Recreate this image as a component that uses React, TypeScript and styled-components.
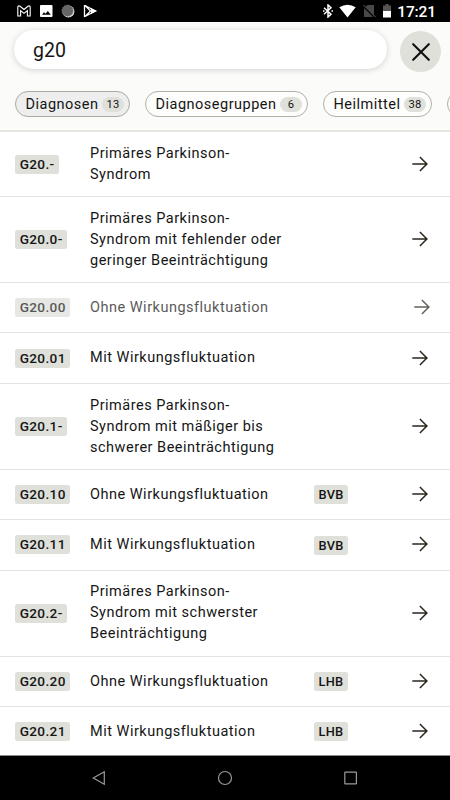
import React from "react";
import styled, { createGlobalStyle } from "styled-components";

const GlobalStyle = createGlobalStyle`
  * { box-sizing: border-box; }
  html, body { margin: 0; padding: 0; background: #fff; overflow: hidden; }
  button { font: inherit; color: inherit; letter-spacing: inherit; cursor: pointer; }
`;

const Screen = styled.div`
  width: 450px;
  height: 800px;
  display: flex;
  flex-direction: column;
  overflow: hidden;
  background: #fff;
  color: #151515;
  font-family: Roboto, sans-serif;
`;

const StatusBar = styled.div`
  flex: none;
  height: 22px;
  padding: 0 14px 0 17px;
  display: flex;
  align-items: center;
  justify-content: space-between;
  background: #000;
  color: #fff;
`;

const StatusGroup = styled.div<{ $gap: number }>`
  display: flex;
  align-items: center;
  gap: ${(p) => p.$gap}px;
`;

const Clock = styled.span`
  font-size: 15.5px;
  line-height: 22px;
  font-weight: 500;
  letter-spacing: -0.1px;
  margin-top: 1px;
`;

const Header = styled.header`
  flex: none;
  height: 110px;
  background: #fbfbf9;
  border-bottom: 2px solid #e6e6e1;
`;

const SearchRow = styled.div`
  display: flex;
  align-items: flex-start;
  gap: 13.2px;
  padding: 8px 0 0 14px;
`;

const SearchField = styled.div`
  width: 373px;
  height: 39px;
  padding-left: 19px;
  border-radius: 20px;
  background: #fff;
  box-shadow: 0 1px 6px rgba(0, 0, 0, 0.17);
  font-size: 19.5px;
  line-height: 42px;
`;

const CloseButton = styled.button`
  width: 41px;
  height: 41px;
  margin-top: 1px;
  padding: 0;
  border: 0;
  border-radius: 50%;
  display: grid;
  place-items: center;
  background: #dfe0da;
`;

const Chips = styled.div`
  display: flex;
  gap: 15px;
  padding: 19px 0 0 15px;
`;

const Chip = styled.button<{ $active?: boolean; $width: number }>`
  flex: none;
  width: ${(p) => p.$width}px;
  height: 26px;
  padding: 0 5px 0 9.5px;
  display: flex;
  align-items: center;
  justify-content: space-between;
  white-space: nowrap;
  border: 1px solid ${(p) => (p.$active ? "#a9aaa2" : "#b0b1a5")};
  border-radius: 13px;
  background: ${(p) => (p.$active ? "#eeeeee" : "#fdfdfb")};
  font-size: 14.5px;
  letter-spacing: 0.5px;
`;

const Count = styled.span`
  width: 22px;
  height: 15px;
  border-radius: 8px;
  background: #dfe0da;
  font-size: 11.2px;
  line-height: 15px;
  letter-spacing: 0.2px;
  text-align: center;
`;

const List = styled.main`
  flex: 1;
  min-height: 0;
  overflow: hidden;
  border-bottom: 1px solid #858a87;
`;

const Row = styled.div<{ $dim?: boolean }>`
  min-height: 50.4px;
  padding: 10.5px ${(p) => (p.$dim ? 19 : 21)}px 11.5px 15px;
  display: grid;
  grid-template-columns: 75px 224px 1fr 18px;
  align-items: center;
  border-bottom: 1px solid #e3e3e3;
  & > * { opacity: ${(p) => (p.$dim ? 0.72 : 1)}; }
`;

const Label = styled.div`
  padding-top: 0.4px;
  margin-bottom: -0.4px;
  font-size: 14.5px;
  line-height: 21px;
  letter-spacing: 0.5px;
  white-space: pre-line;
`;

const Badge = styled.span<{ $small?: boolean }>`
  justify-self: start;
  height: 19px;
  margin-top: ${(p) => (p.$small ? 1.6 : 1)}px;
  padding: 0 ${(p) => (p.$small ? 4.5 : 4.7)}px;
  border-radius: 2.5px;
  background: #dfe0da;
  font-size: ${(p) => (p.$small ? 12.8 : 13.6)}px;
  font-weight: 500;
  line-height: 19px;
  letter-spacing: ${(p) => (p.$small ? 0.25 : 0.35)}px;
`;

const Arrow = styled.svg`
  grid-column: 4;
  display: block;
`;

const NavBar = styled.nav`
  flex: none;
  height: 44px;
  padding: 0 91px;
  display: flex;
  align-items: center;
  justify-content: space-between;
  background: #000;
`;

const rows = [
  { code: "G20.-", text: "Primäres Parkinson-\nSyndrom" },
  { code: "G20.0-", text: "Primäres Parkinson-\nSyndrom mit fehlender oder\ngeringer Beeinträchtigung" },
  { code: "G20.00", text: "Ohne Wirkungsfluktuation", dim: true },
  { code: "G20.01", text: "Mit Wirkungsfluktuation" },
  { code: "G20.1-", text: "Primäres Parkinson-\nSyndrom mit mäßiger bis\nschwerer Beeinträchtigung" },
  { code: "G20.10", text: "Ohne Wirkungsfluktuation", tag: "BVB" },
  { code: "G20.11", text: "Mit Wirkungsfluktuation", tag: "BVB" },
  { code: "G20.2-", text: "Primäres Parkinson-\nSyndrom mit schwerster\nBeeinträchtigung" },
  { code: "G20.20", text: "Ohne Wirkungsfluktuation", tag: "LHB" },
  { code: "G20.21", text: "Mit Wirkungsfluktuation", tag: "LHB" },
];

const StatusIconsLeft = () => (
  <StatusGroup $gap={8}>
    <svg width="14" height="12" viewBox="0 0 14 12" fill="none" stroke="#fff" strokeWidth="1.1">
      <path d="M.8 11V1.8Q1.5.2 3 1.3l4 3.2 4-3.2q1.5-1.1 2.2.5V11h-2.8V5.6L7 8.4 3.6 5.6V11z" />
    </svg>
    <svg width="14" height="14" viewBox="0 0 14 14">
      <rect x="1" y="1" width="12.5" height="12" rx="1" fill="#fff" />
      <path d="M3 10.8l2-2.6 1.6 1.6 2.2-2.8 3 3.8z" fill="#000" />
    </svg>
    <svg width="14" height="14" viewBox="0 0 14 14">
      <circle cx="7.4" cy="7.5" r="6" fill="#ddd" />
      <circle cx="6.5" cy="6.7" r="5.6" fill="#666" stroke="#777" strokeDasharray="1 1" />
    </svg>
    <svg width="14" height="14" viewBox="0 0 14 14" fill="none" stroke="#fff" strokeWidth="1.3">
      <path d="M1.5 1v12M1.5 1.2 12.5 7l-11 5.8M2 1.5 7.5 7 2 12.5" />
      <path d="M8.5 5l4 2-4 2z" fill="#fff" />
    </svg>
  </StatusGroup>
);

const StatusIconsRight = () => (
  <StatusGroup $gap={6.5}>
    <svg width="10" height="14" viewBox="0 0 10 14" fill="none" stroke="#fff" strokeWidth="1.5">
      <path d="M1 3.7 8 10.2 5 13V1l3 2.8L1 10.3" />
      <path d="M0 7h1.5M8.5 7H10" />
    </svg>
    <svg width="17" height="14" viewBox="0 0 17 14">
      <path d="M.3 3.3Q8.5-2 16.7 3.3L8.5 13.5z" fill="#fff" />
    </svg>
    <svg width="13" height="14" viewBox="0 0 13 14">
      <path d="M4.5 1H11v12H1V4.5z" fill="#484848" />
      <path d="M0 1.5 12 13.5" stroke="#000" strokeWidth="2" />
      <path d="M.5 1 12.5 13" stroke="#666" />
    </svg>
    <svg width="13" height="14" viewBox="1 0 13 14">
      <path d="M4.5 0h3v1.6H10V7H2V1.6h2.5z" fill="#555" />
      <path d="M2 7h8v6.5H2z" fill="#fff" />
    </svg>
  </StatusGroup>
);

export default function App() {
  return (
    <>
      <GlobalStyle />
      <Screen>
        <StatusBar>
          <StatusIconsLeft />
          <StatusGroup $gap={2}>
            <StatusIconsRight />
            <Clock>17:21</Clock>
          </StatusGroup>
        </StatusBar>
        <Header>
          <SearchRow>
            <SearchField>g20</SearchField>
            <CloseButton aria-label="Schließen">
              <svg width="18" height="18" viewBox="0 0 18 18" stroke="#111" strokeWidth="2.1" strokeLinecap="round">
                <path d="M1.2 1.2l15.6 15.6M16.8 1.2 1.2 16.8" />
              </svg>
            </CloseButton>
          </SearchRow>
          <Chips>
            <Chip $active $width={115}>Diagnosen<Count>13</Count></Chip>
            <Chip $width={163}>Diagnosegruppen<Count>6</Count></Chip>
            <Chip $width={109}>Heilmittel<Count>38</Count></Chip>
            <Chip $width={109} aria-hidden />
          </Chips>
        </Header>
        <List>
          {rows.map((r) => (
            <Row key={r.code} $dim={r.dim}>
              <Badge>{r.code}</Badge>
              <Label>{r.text}</Label>
              {r.tag && <Badge $small>{r.tag}</Badge>}
              <Arrow width="18" height="18" viewBox="0 0 18 18" fill="none" stroke="#29261a" strokeWidth="1.5">
                <path d="M1.3 9h14.5M8.9 2l7 7-7 7" />
              </Arrow>
            </Row>
          ))}
        </List>
        <NavBar>
          <svg width="15" height="16" viewBox="0 0 15 16" fill="none" stroke="#999" strokeWidth="1.2">
            <path d="M13.3 1.8v12.4L2.3 8z" />
          </svg>
          <svg width="16" height="16" viewBox="0 0 16 16" fill="none" stroke="#999" strokeWidth="1.2">
            <circle cx="8" cy="8" r="6.5" />
          </svg>
          <svg width="16" height="16" viewBox="0 0 16 16" fill="none" stroke="#999" strokeWidth="1.2">
            <rect x="1.8" y="2.2" width="11.6" height="11.6" rx=".4" />
          </svg>
        </NavBar>
      </Screen>
    </>
  );
}
